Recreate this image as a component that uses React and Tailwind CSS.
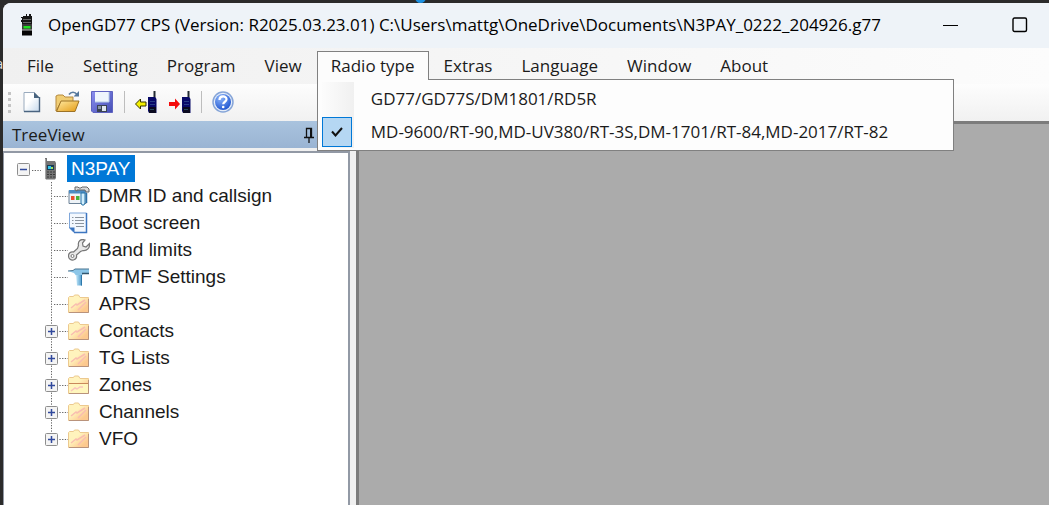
import React from "react";

const menuFont = "font-['Open_Sans',sans-serif]";

function RadioAppIcon() {
  return (
    <svg width="14" height="22" viewBox="0 0 14 22" aria-hidden="true">
      <path d="M5 0h1v2h2V0h2v2h1v8H1V8H0V6h1V4H0V3h2V2h3z" fill="#161616" />
      <path d="M2 5.500h8M2 8.500h8" stroke="#666" />
      <rect x="1" y="10" width="10" height="6" fill="#3a3a3a" />
      <rect x="2.500" y="12" width="7" height="2.500" fill="#1ee01e" />
      <rect x="1" y="16" width="10" height="5.500" fill="#050505" />
      <path d="M1 16h10" stroke="#bbb" />
    </svg>
  );
}

function NewIcon() {
  return (
    <svg width="18" height="22" viewBox="0 0 18 22" aria-hidden="true">
      <defs>
        <linearGradient id="pg" x1="0" y1="0" x2="1" y2="1">
          <stop offset="0.4" stopColor="#fff" />
          <stop offset="1" stopColor="#c4d8ec" />
        </linearGradient>
      </defs>
      <path d="M1 1.500h10l5.500 5.500v13.500H1z" fill="url(#pg)" stroke="#9aabbe" />
      <path d="M16.500 6v14.500H1" fill="none" stroke="#4a6480" strokeWidth="1.400" />
      <path d="M11 1v6h6z" fill="#49647f" />
    </svg>
  );
}

function OpenIcon() {
  return (
    <svg width="25" height="22" viewBox="0 0 25 22" aria-hidden="true">
      <defs>
        <linearGradient id="of" x1="0" y1="0" x2="1" y2="1">
          <stop offset="0" stopColor="#ffe9a0" />
          <stop offset="1" stopColor="#e39a14" />
        </linearGradient>
      </defs>
      <path d="M1 20V5l2-1h5l2 2h8v5H6z" fill="#f0cd74" stroke="#b58a3f" />
      <path d="M6 10h18l-4 10.500H1.500z" fill="url(#of)" stroke="#9c7226" />
      <path d="M14 3.500c2-3 6-3 8 0" fill="none" stroke="#5b7da0" strokeWidth="1.600" />
      <path d="M18.500 5.500H24V0z" fill="#55779b" />
    </svg>
  );
}

function SaveIcon() {
  return (
    <svg width="22" height="22" viewBox="0 0 22 22" aria-hidden="true">
      <defs>
        <linearGradient id="sv" x1="0" y1="0" x2="1" y2="1">
          <stop offset="0" stopColor="#8b8ff0" />
          <stop offset="1" stopColor="#434db4" />
        </linearGradient>
      </defs>
      <path d="M.5.500h21v21H2L.5 20z" fill="url(#sv)" stroke="#5f63c0" />
      <path d="M4 1h14v10H4z" fill="#eef5fc" />
      <path d="M18 1v10H4" fill="none" stroke="#b6cbe6" />
      <path d="M6 14h10v7H6z" fill="#3a4352" />
      <path d="M11 15h4v5h-4z" fill="#dfe6ee" />
      <path d="M7 15h3v3H7z" fill="#8894a8" />
    </svg>
  );
}

function TransferIcon({ direction }) {
  return (
    <svg width="23" height="23" viewBox="0 0 23 23" aria-hidden="true">
      {direction === "read" ? (
        <path d="M.5 13l5-5v3H11v4H5.500v3z" fill="#f4f000" stroke="#333300" />
      ) : (
        <path d="M11 13L6 7.500V11H0v4h6v3.500z" fill="#f40b0b" />
      )}
      <path d="M18.500 0h2v8h-2z" fill="#222b33" />
      <path d="M13 6h7l1.500 2v14H14l-1-2z" fill="#080a68" />
      <path d="M15 10.500h5M15 13.500h5" stroke="#2a3f88" />
      <path d="M14 16h7v6h-7z" fill="#0a0a20" />
      <path d="M15 18.500h4" stroke="#294a5b" />
    </svg>
  );
}

function HelpIcon() {
  return (
    <svg width="22" height="22" viewBox="0 0 22 22" aria-hidden="true">
      <defs>
        <radialGradient id="hp" cx="0.35" cy="0.25" r="0.8">
          <stop offset="0" stopColor="#8bb5fa" />
          <stop offset="1" stopColor="#1f55d0" />
        </radialGradient>
      </defs>
      <circle cx="11" cy="11" r="10" fill="#e5edf9" stroke="#86a5d8" strokeWidth="1.500" />
      <circle cx="11" cy="11" r="8" fill="url(#hp)" />
      <path d="M7.500 9c0-4.600 7-4.600 7-.7 0 2.500-3.300 2.400-3.300 5" fill="none" stroke="#fff" strokeWidth="2.200" />
      <circle cx="11.200" cy="16" r="1.300" fill="#fff" />
    </svg>
  );
}

function HandsetIcon() {
  return (
    <svg width="13" height="22" viewBox="0 0 13 22" aria-hidden="true">
      <path d="M1 0h2v3h8l1 2v15l-1 1.500H2L1 20z" fill="#747474" />
      <path d="M1.500 1v19" stroke="#a4a4a4" />
      <path d="M3 7h7v5H3z" fill="#163c55" />
      <path d="M4 8h3v3H4z" fill="#35c4ea" />
      <path d="M7 9h2v2H7z" fill="#9be05b" />
      <path d="M3 14h2m1 0h2m1 0h2M3 16.500h2m1 0h2m1 0h2M3 19h2m1 0h2m1 0h2" stroke="#3a3a3a" strokeWidth="1.200" />
    </svg>
  );
}

function ToolboxIcon() {
  return (
    <svg width="22" height="20" viewBox="0 0 22 20" aria-hidden="true">
      <path d="M1 4.500h17v13H1z" fill="#eef3f7" stroke="#6c8297" />
      <path d="M1 4h17v3.500H1z" fill="#4d8cc2" />
      <rect x="3" y="10" width="3.500" height="4" fill="#e8502e" />
      <rect x="8" y="10" width="3.500" height="4" fill="#49b33a" />
      <path d="M7 4V1h3l1 1h2l1-1h5l2 2v3h-3l-1-2H9v1z" fill="#dadada" stroke="#666" />
      <path d="M13 7h4v10l-1 2h-2l-1-2z" fill="#d3effd" stroke="#2874a8" />
      <path d="M18.500 7v10" stroke="#2b6fa8" strokeWidth="1.500" />
    </svg>
  );
}

function NoteIcon() {
  return (
    <svg width="20" height="22" viewBox="0 0 20 22" aria-hidden="true">
      <path d="M1.500 1h17v19.500H6L1.500 16z" fill="#f3f8fe" stroke="#7fa7da" />
      <path d="M18.500 1v19.500H6" fill="none" stroke="#3d76c0" strokeWidth="1.500" />
      <path d="M1 15.500h5.500V21z" fill="#3a74c0" />
      <path d="M4 5.500h1.500M7 5.500h9M4 8.500h1.500M7 8.500h9M4 11.500h1.500M7 11.500h9M8 14.500h8" stroke="#8b949e" />
    </svg>
  );
}

function WrenchIcon() {
  return (
    <svg width="22" height="22" viewBox="0 0 22 22" aria-hidden="true">
      <path
        d="M17 1c-4-1.500-7.500 1-6.500 5.500L9.500 9.500 5.500 13c-3-.5-5 1-5 4s2.500 4.500 5 4 3.500-2.500 3-5l4-3.500 2.500-1c4 .5 7-2.500 6.500-7L18 8l-3-1-.5-3z"
        fill="#e8e8e8"
        stroke="#777"
        strokeWidth="1.200"
      />
      <circle cx="4.500" cy="17" r="1.500" fill="#fff" stroke="#777" />
    </svg>
  );
}

function HammerIcon() {
  return (
    <svg width="22" height="20" viewBox="0 0 22 20" aria-hidden="true">
      <defs>
        <linearGradient id="hm" x1="0" x2="1">
          <stop offset="0" stopColor="#c5e9fa" />
          <stop offset="1" stopColor="#4795c8" />
        </linearGradient>
      </defs>
      <path d="M0 4l5-.5L7 2h14v5h-6l-1 1.500H8L6 6z" fill="#8cc6e8" />
      <path d="M0 4l5-.5L7 2h14" fill="none" stroke="#4a7490" />
      <path d="M14 6.500h7" stroke="#33566e" strokeWidth="1.500" />
      <path d="M8 8h6v10.500H9z" fill="url(#hm)" />
      <path d="M13.500 8v10.500" stroke="#2e78aa" />
    </svg>
  );
}

function FolderIcon({ open = false }) {
  return (
    <svg width="22" height="20" viewBox="0 0 22 20" aria-hidden="true">
      <defs>
        <linearGradient id="fd" x1="0" y1="0" x2="1" y2="1">
          <stop offset="0.400" stopColor="#fff3bd" />
          <stop offset="0.800" stopColor="#fdc98f" />
        </linearGradient>
      </defs>
      <path d="M.5 18.500v-15l1-1h4l1-1.500h4l1.500 2.500h8.500v15z" fill="url(#fd)" stroke="#ecc98f" />
      {open ? (
        <>
          <path d="M1 8.500h19" stroke="#c9895b" />
          <path d="M1 9h20v9H1z" fill="#fff6bd" />
          <path d="M3 16l4-3 2 1 3-2h3" stroke="#f9c5bd" strokeWidth="1.500" fill="none" />
        </>
      ) : (
        <path d="M3 14l5-4 1 1 8-5M10 16l8-8" stroke="#f9bdb0" strokeWidth="1.500" fill="none" />
      )}
      <path d="M20.500 5v13.500H1" fill="none" stroke="#b9937c" />
    </svg>
  );
}

function Expander({ x, y, open }) {
  return (
    <g>
      <rect x={x + 0.5} y={y + 0.5} width="12" height="12" rx="1" fill="#f4f4f4" stroke="#8e8e8e" />
      <path d={`M${x + 3} ${y + 6.5}h7`} stroke="#31499c" strokeWidth="1.500" />
      {!open && <path d={`M${x + 6.5} ${y + 3}v7`} stroke="#31499c" strokeWidth="1.500" />}
    </g>
  );
}

function Branch({ expandable, last }) {
  return (
    <svg className="shrink-0" width="24" height="27" viewBox="0 0 24 27" aria-hidden="true">
      <path d={last ? "M7.500 0v14" : "M7.500 0v27"} stroke="#666" strokeDasharray="1.300 1.400" />
      <path d="M10 14.500h14" stroke="#666" strokeDasharray="1.300 1.400" />
      {expandable && <Expander x={1} y={8} />}
    </svg>
  );
}

const nodes = [
  { label: "DMR ID and callsign", icon: <ToolboxIcon /> },
  { label: "Boot screen", icon: <NoteIcon /> },
  { label: "Band limits", icon: <WrenchIcon /> },
  { label: "DTMF Settings", icon: <HammerIcon /> },
  { label: "APRS", icon: <FolderIcon /> },
  { label: "Contacts", icon: <FolderIcon />, expandable: true },
  { label: "TG Lists", icon: <FolderIcon />, expandable: true },
  { label: "Zones", icon: <FolderIcon open />, expandable: true },
  { label: "Channels", icon: <FolderIcon />, expandable: true },
  { label: "VFO", icon: <FolderIcon />, expandable: true },
];

function TreePanel() {
  return (
    <aside className="flex w-[347px] shrink-0 flex-col bg-[#f0f0f0]">
      <header className="flex h-[27px] shrink-0 items-center justify-between bg-gradient-to-b from-[#a9c3de] to-[#9ab4d3] pr-9 pl-[9px]">
        <h2 className={`${menuFont} text-[17px] leading-5 text-[#1b1b1b]`}>TreeView</h2>
        <button type="button" aria-label="Auto hide" className="h-4">
          <svg width="10" height="16" viewBox="0 0 10 16" aria-hidden="true">
            <path d="M2.500 10V1.500h5V10M0 10.500h10M5 11v5" fill="none" stroke="#111" strokeWidth="1.300" />
            <path d="M6 1h2v9H6z" fill="#111" />
          </svg>
        </button>
      </header>
      <div className="mt-[3px] flex-1 border-t-2 border-r-2 border-l border-[#9299a5] bg-white pt-[2px] font-['Liberation_Sans',sans-serif] text-[19px] leading-[27px] text-[#1a1a1a]">
        <ul role="tree" aria-label="TreeView">
          <li role="treeitem" aria-expanded="true">
            <div className="flex h-[27px] items-center pl-[13px]">
              <svg className="mr-[3px] shrink-0" width="24" height="27" viewBox="0 0 24 27" aria-hidden="true">
                <path d="M15 15.500h9" stroke="#666" strokeDasharray="1.300 1.400" />
                <Expander x={0} y={8} open />
              </svg>
              <HandsetIcon />
              <span className="ml-[10px] bg-[#0078d7] px-1 text-white">N3PAY</span>
            </div>
            <ul role="group">
              {nodes.map((node, i) => (
                <li key={node.label} role="treeitem" className="flex h-[27px] items-center pl-10">
                  <Branch expandable={node.expandable} last={i === nodes.length - 1} />
                  <span className="mr-2 flex w-[23px] shrink-0">{node.icon}</span>
                  <span>{node.label}</span>
                </li>
              ))}
            </ul>
          </li>
        </ul>
      </div>
    </aside>
  );
}

function MenuButton({ children }) {
  return (
    <button type="button" className="h-[29px] px-[14px] whitespace-nowrap">
      {children}
    </button>
  );
}

function RadioTypeMenu() {
  return (
    <div className="relative z-10">
      <button
        type="button"
        aria-expanded="true"
        className="relative z-10 block h-[29px] border border-b-0 border-[#808080] bg-[#fcfcfc] px-[13px] whitespace-nowrap"
      >
        Radio type
      </button>
      <div
        role="menu"
        className="absolute top-[28px] left-0 w-[637px] border border-[#808080] bg-[#fdfdfd] py-[2px] pr-[2px] pl-1"
      >
        <div className="bg-[linear-gradient(to_right,#fcfcfc,#f0f0f0)] bg-[length:32px_100%] bg-no-repeat">
          {["GD77/GD77S/DM1801/RD5R", "MD-9600/RT-90,MD-UV380/RT-3S,DM-1701/RT-84,MD-2017/RT-82"].map((label, i) => (
            <button
              key={label}
              type="button"
              role="menuitemradio"
              aria-checked={i === 1}
              className="flex h-[33px] w-full items-center gap-[19px] text-left whitespace-nowrap"
            >
              {i === 1 ? (
                <span className="flex h-[30px] w-[30px] items-center justify-center border border-[#0078d7] bg-[#b5d7f3]">
                  <svg width="12" height="10" viewBox="0 0 12 10" aria-hidden="true">
                    <path d="M1 4.500l3.500 4L11 1" fill="none" stroke="#111" strokeWidth="2" />
                  </svg>
                </span>
              ) : (
                <span className="h-[30px] w-[30px]" />
              )}
              <span>{label}</span>
            </button>
          ))}
        </div>
      </div>
    </div>
  );
}

function ToolButton({ label, children }) {
  return (
    <button type="button" aria-label={label} className="flex h-6 w-[26px] items-center justify-center">
      {children}
    </button>
  );
}

export default function App() {
  return (
    <div className="relative flex min-h-screen overflow-hidden bg-[#2b2b2b] pt-[3px] pl-[3px]">
      <span aria-hidden="true" className="absolute top-[52px] -left-[5px] font-['Open_Sans',sans-serif] text-[15px] text-[#ddd]">
        a
      </span>
      <span aria-hidden="true" className="absolute -top-2 left-[415px] h-[11px] w-[11px] rounded-full bg-[#1c90e0]" />
      <div className="relative flex min-w-0 flex-1 flex-col overflow-hidden rounded-tl-[8px] bg-[#f0f0f0]">
        <header className="flex h-[45px] shrink-0 items-center bg-[#eef3f8] pr-[21px] pb-[2px] pl-[18px]">
          <RadioAppIcon />
          <h1 className={`${menuFont} ml-[13px] flex-1 text-[17px] whitespace-nowrap text-black`}>
            OpenGD77 CPS (Version: R2025.03.23.01) C:\Users\mattg\OneDrive\Documents\N3PAY_0222_204926.g77
          </h1>
          <button type="button" aria-label="Minimize" className="mr-[53px]">
            <svg width="16" height="16" viewBox="0 0 16 16" aria-hidden="true">
              <path d="M0 8.500h15" stroke="#000" />
            </svg>
          </button>
          <button type="button" aria-label="Maximize">
            <svg width="16" height="16" viewBox="0 0 16 16" aria-hidden="true">
              <rect x="1" y="1" width="13.500" height="13.500" rx="1.500" fill="none" stroke="#000" strokeWidth="1.400" />
            </svg>
          </button>
        </header>
        <nav className={`${menuFont} flex h-9 shrink-0 items-center gap-px bg-gradient-to-r from-[#f0f0f0] to-[#fcfcfc] pb-px pl-[10px] text-[17px] text-[#1b1b1b]`}>
          <MenuButton>File</MenuButton>
          <MenuButton>Setting</MenuButton>
          <MenuButton>Program</MenuButton>
          <MenuButton>View</MenuButton>
          <RadioTypeMenu />
          <MenuButton>Extras</MenuButton>
          <MenuButton>Language</MenuButton>
          <MenuButton>Window</MenuButton>
          <MenuButton>About</MenuButton>
        </nav>
        <div className="flex h-[37px] shrink-0 items-center bg-gradient-to-b from-[#fdfdfd] to-[#f1f1f1] pb-px pl-[5px]">
          <span className="mr-2 grid gap-[3px]" aria-hidden="true">
            <i className="h-[3px] w-[3px] bg-[#c4c4c4]" />
            <i className="h-[3px] w-[3px] bg-[#c4c4c4]" />
            <i className="h-[3px] w-[3px] bg-[#c4c4c4]" />
            <i className="h-[3px] w-[3px] bg-[#c4c4c4]" />
          </span>
          <div className="flex items-center gap-2">
            <div className="flex items-center gap-[9px]">
              <ToolButton label="New"><NewIcon /></ToolButton>
              <ToolButton label="Open"><OpenIcon /></ToolButton>
              <ToolButton label="Save"><SaveIcon /></ToolButton>
            </div>
            <span className="ml-px h-[22px] w-px bg-[#bdbdbd]" />
            <ToolButton label="Read"><TransferIcon direction="read" /></ToolButton>
            <ToolButton label="Write"><TransferIcon direction="write" /></ToolButton>
            <span className="h-[22px] w-px bg-[#bdbdbd]" />
            <ToolButton label="Help"><HelpIcon /></ToolButton>
          </div>
        </div>
        <div className="flex flex-1">
          <TreePanel />
          <main className="ml-[6px] flex-1 border-t-[3px] border-l-[3px] border-[#7c7c7c] bg-[#ababab]" />
        </div>
      </div>
    </div>
  );
}
